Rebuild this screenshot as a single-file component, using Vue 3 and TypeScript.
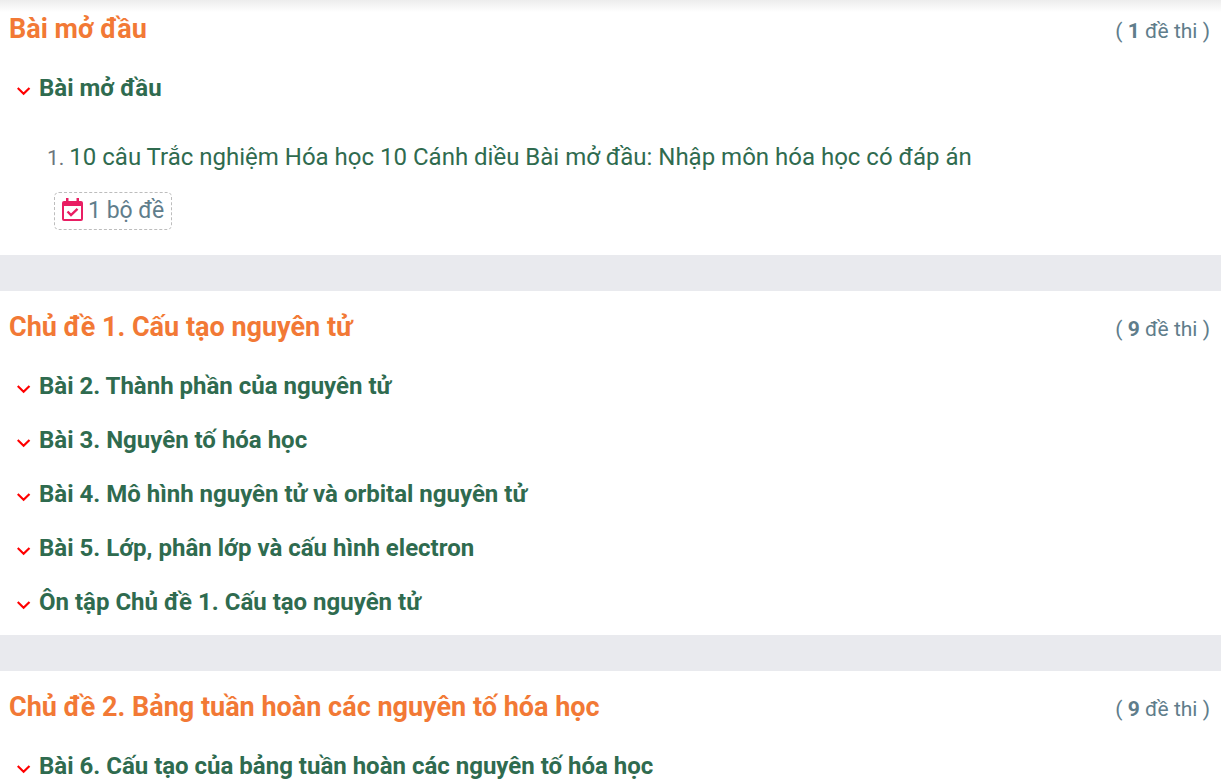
<script setup lang="ts">
import { reactive } from 'vue'

interface Exam {
  title: string
  sets: number
}

interface Lesson {
  title: string
  open: boolean
  exams: Exam[]
}

interface Chapter {
  title: string
  total: number
  lessons: Lesson[]
}

const lesson = (title: string, exams: Exam[] = []): Lesson => ({
  title,
  open: exams.length > 0,
  exams,
})

const chapters = reactive<Chapter[]>([
  {
    title: 'Bài mở đầu',
    total: 1,
    lessons: [
      lesson('Bài mở đầu', [
        {
          title: '10 câu Trắc nghiệm Hóa học 10 Cánh diều Bài mở đầu: Nhập môn hóa học có đáp án',
          sets: 1,
        },
      ]),
    ],
  },
  {
    title: 'Chủ đề 1. Cấu tạo nguyên tử',
    total: 9,
    lessons: [
      lesson('Bài 2. Thành phần của nguyên tử'),
      lesson('Bài 3. Nguyên tố hóa học'),
      lesson('Bài 4. Mô hình nguyên tử và orbital nguyên tử'),
      lesson('Bài 5. Lớp, phân lớp và cấu hình electron'),
      lesson('Ôn tập Chủ đề 1. Cấu tạo nguyên tử'),
    ],
  },
  {
    title: 'Chủ đề 2. Bảng tuần hoàn các nguyên tố hóa học',
    total: 9,
    lessons: [lesson('Bài 6. Cấu tạo của bảng tuần hoàn các nguyên tố hóa học')],
  },
])
</script>

<template>
  <main class="page">
    <section v-for="chapter in chapters" :key="chapter.title" class="chapter">
      <header class="chapter-head">
        <h2 class="chapter-title">{{ chapter.title }}</h2>
        <span class="chapter-total">( <b>{{ chapter.total }}</b> đề thi )</span>
      </header>
      <div v-for="item in chapter.lessons" :key="item.title" class="lesson">
        <h3 class="lesson-head">
          <button
            type="button"
            class="lesson-toggle"
            :aria-expanded="item.open"
            @click="item.open = !item.open"
          >
            <svg class="chevron" viewBox="0 0 14 10" aria-hidden="true">
              <path d="M0.700 2 L6.600 7.800 L12.500 2" />
            </svg>
            <span>{{ item.title }}</span>
          </button>
        </h3>
        <ol v-if="item.open && item.exams.length" class="exams">
          <li v-for="(exam, i) in item.exams" :key="exam.title" class="exam">
            <div class="exam-line">
              <span class="exam-number">{{ i + 1 }}.</span>
              <a href="#" class="exam-link">{{ exam.title }}</a>
            </div>
            <span class="sets">
              <svg class="calendar" viewBox="0 0 22 24" aria-hidden="true">
                <path
                  fill-rule="evenodd"
                  d="M4 0h2.500v3h8V0H17v3h2a2 2 0 0 1 2 2v16a2 2 0 0 1-2 2H2a2 2 0 0 1-2-2V5a2 2 0 0 1 2-2h2zM2 8v13h17V8z"
                />
                <path class="tick" d="M5.500 13.500 L9 17 L15.500 10.800" />
              </svg>
              <span>{{ exam.sets }} bộ đề</span>
            </span>
          </li>
        </ol>
      </div>
    </section>
  </main>
</template>

<style>
body {
  margin: 0;
  background: #ffffff;
}
</style>

<style scoped>
.page {
  display: flex;
  flex-direction: column;
  gap: 36px;
  background: #e9eaee;
  font-family: Roboto, 'Noto Sans', sans-serif;
  font-size: 24px;
  line-height: 36px;
  color: #607d8b;
}

.chapter {
  padding: 18px 11px 6px 9px;
  background: #ffffff;
}

.chapter:first-child {
  padding-top: 11px;
  background: linear-gradient(#ededed, #ffffff 12px);
}

.chapter:last-child {
  padding-bottom: 0;
}

.chapter-head {
  display: flex;
  justify-content: space-between;
  align-items: center;
  margin-bottom: 14px;
}

.chapter-title {
  margin: 0;
  font-size: 27px;
  font-weight: 700;
  color: #f27935;
}

.chapter-total {
  flex: none;
  padding-top: 4px;
  font-size: 21px;
  line-height: 32px;
}

.chapter-total b {
  font-weight: 700;
}

.lesson-head {
  margin: 0;
  font-size: 24px;
}

.lesson-toggle {
  display: flex;
  align-items: center;
  gap: 8px;
  width: 100%;
  padding: 9px 8px;
  border: 0;
  background: none;
  font: inherit;
  font-weight: 700;
  text-align: left;
  color: #2f6b4f;
  cursor: pointer;
}

.chevron {
  flex: none;
  width: 14px;
  height: 10px;
  margin-top: 6px;
  fill: none;
  stroke: #ff0000;
  stroke-width: 2.2;
}

.exams {
  margin: 0;
  padding: 24px 8px 19px 38px;
  list-style: none;
}

.exam-line {
  display: flex;
  align-items: baseline;
  gap: 5px;
  margin-bottom: 16px;
}

.exam-number {
  font-size: 21px;
  color: #6c757d;
}

.exam-link {
  color: #2f6b4f;
  text-decoration: none;
}

.sets {
  display: inline-flex;
  align-items: center;
  gap: 4px;
  margin-left: 7px;
  padding: 0 7px;
  border: 1px dashed #bdbdbd;
  border-radius: 5px;
  font-size: 23px;
  vertical-align: top;
}

.calendar {
  width: 22px;
  height: 24px;
  margin-bottom: 2px;
  fill: #e91e63;
}

.tick {
  fill: none;
  stroke: #e91e63;
  stroke-width: 2.4;
}
</style>
